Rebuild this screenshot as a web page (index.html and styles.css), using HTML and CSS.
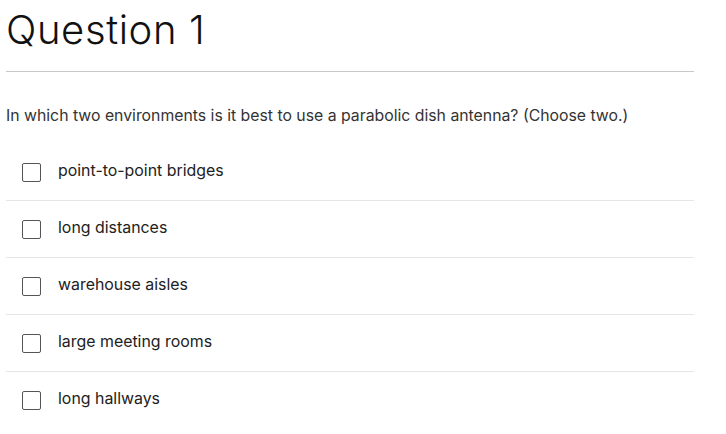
FILE: index.html
```html
<!DOCTYPE html>
<html>
<head>
<meta charset="utf-8">
<link rel="stylesheet" href="styles.css">
</head>
<body>
<div class="page">
  <h1 class="title">Question 1</h1>
  <div class="rule"></div>
  <p class="prompt">In which two environments is it best to use a parabolic dish antenna? (Choose two.)</p>
  <ul class="options">
    <li class="option"><span class="box"></span><span class="label">point-to-point bridges</span></li>
    <li class="option"><span class="box"></span><span class="label">long distances</span></li>
    <li class="option"><span class="box"></span><span class="label">warehouse aisles</span></li>
    <li class="option"><span class="box"></span><span class="label">large meeting rooms</span></li>
    <li class="option"><span class="box"></span><span class="label">long hallways</span></li>
  </ul>
</div>
</body>
</html>
```
FILE: styles.css
```css
html, body { margin: 0; padding: 0; background: #fff; }
body { font-family: Inter, "Noto Sans", sans-serif; color: #333; }
.page { padding: 0 32px 0 6px; }
.title {
  margin: 0;
  padding-top: 6px;
  font-size: 40px;
  font-weight: 300;
  line-height: 48px;
  letter-spacing: 0.6px;
  color: #111;
}
.rule { height: 1px; background: #c8c8c8; margin-top: 17px; }
.prompt { margin: 34px 0 0; font-size: 15.8px; line-height: 20px; color: #333; }
.options { list-style: none; margin: 18px 0 0; padding: 0; }
.option {
  display: flex;
  align-items: flex-start;
  height: 56px;
  box-sizing: content-box;
  border-bottom: 1px solid #e6e6e6;
  padding-left: 16px;
}
.option:last-child { border-bottom: none; }
.box {
  width: 17px; height: 17px;
  border: 1px solid #555;
  border-radius: 2px;
  flex: none;
  margin-top: 19px;
}
.label { margin-left: 17px; margin-top: 17px; font-size: 15.9px; line-height: 20px; color: #222; }
```
